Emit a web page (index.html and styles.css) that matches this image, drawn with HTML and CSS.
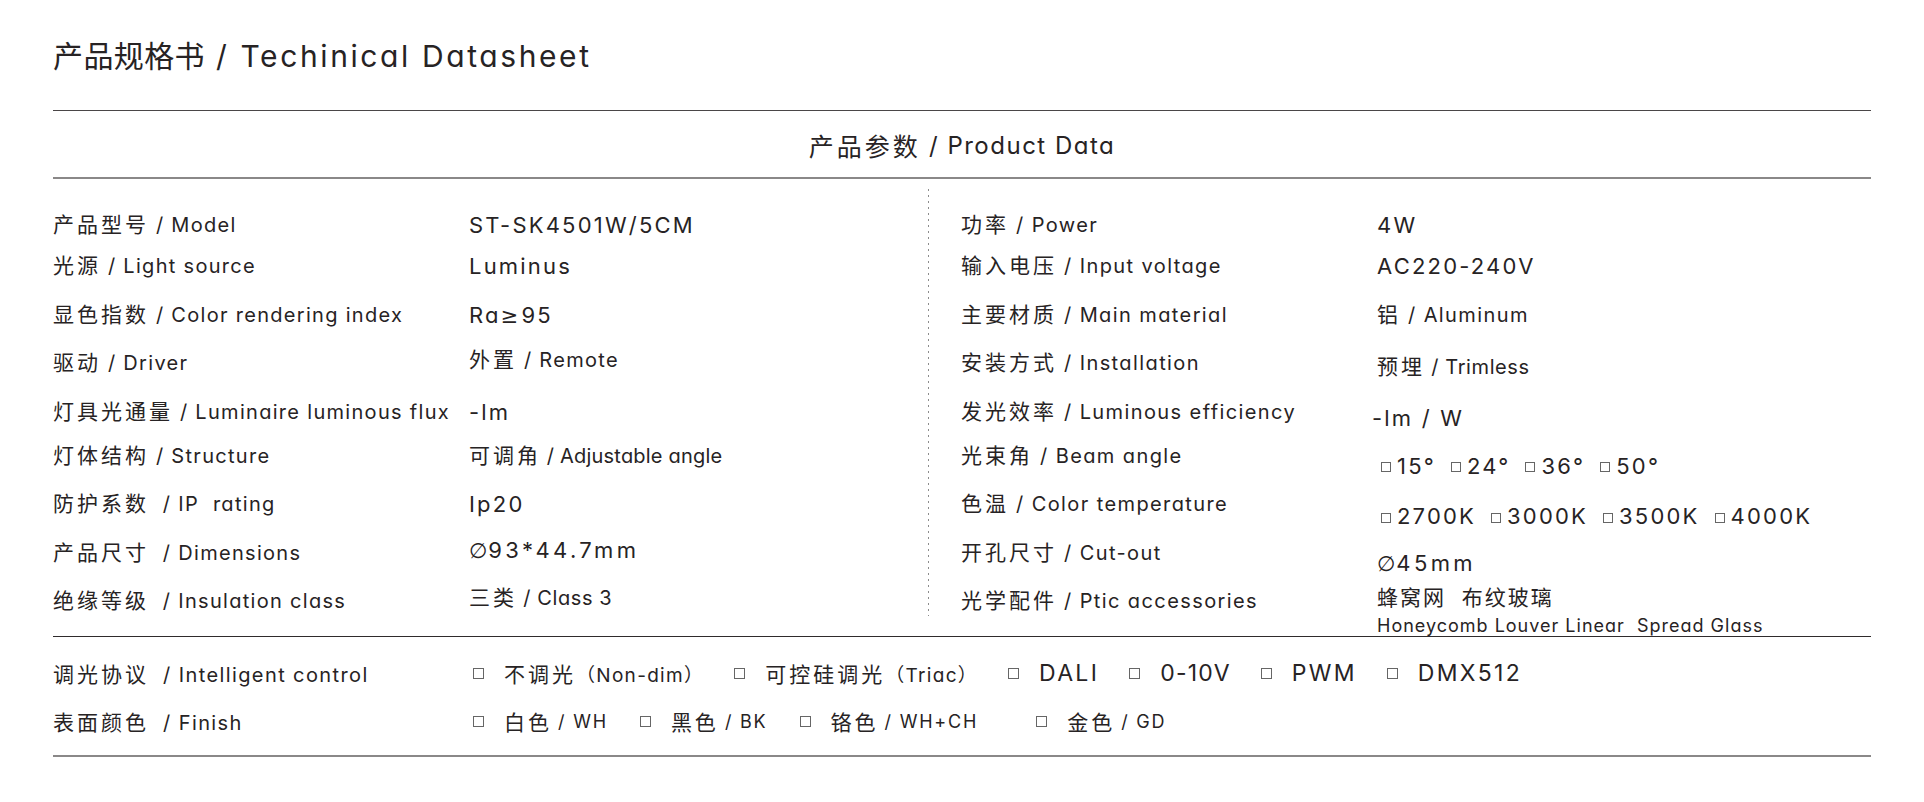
FILE: index.html
```html
<!DOCTYPE html>
<html lang="zh-CN">
<head>
<meta charset="utf-8">
<title>产品规格书 / Techinical Datasheet</title>
<link rel="stylesheet" href="styles.css">
</head>
<body>
<div class="sheet">
  <h1 class="title"><span class="zh">产品规格书</span><span class="en"> / Techinical Datasheet</span></h1>
  <div class="band"><span class="zh">产品参数</span><span class="en">&nbsp;/ Product Data</span></div>
  <div class="specs">
    <div class="col col-left">
      <div class="row"><span class="k"><span class="zh">产品型号</span> / Model</span><span class="v big">ST-SK4501W/5CM</span></div>
      <div class="row"><span class="k"><span class="zh">光源</span> / Light source</span><span class="v big">Luminus</span></div>
      <div class="row"><span class="k"><span class="zh">显色指数</span> / Color rendering index</span><span class="v big">Ra<span class="ge">≥</span>95</span></div>
      <div class="row"><span class="k"><span class="zh">驱动</span> / Driver</span><span class="v up"><span class="zh">外置</span> / Remote</span></div>
      <div class="row"><span class="k"><span class="zh">灯具光通量</span> / Luminaire luminous flux</span><span class="v big">-lm</span></div>
      <div class="row"><span class="k"><span class="zh">灯体结构</span> / Structure</span><span class="v tight"><span class="zh">可调角</span> / Adjustable angle</span></div>
      <div class="row"><span class="k"><span class="zh">防护系数</span> &nbsp;/ IP&nbsp; rating</span><span class="v big">Ip20</span></div>
      <div class="row"><span class="k"><span class="zh">产品尺寸</span> &nbsp;/ Dimensions</span><span class="v big up wide-v"><span class="dia">∅</span>93*44.7mm</span></div>
      <div class="row"><span class="k"><span class="zh">绝缘等级</span> &nbsp;/ Insulation class</span><span class="v up snug"><span class="zh">三类</span> / Class 3</span></div>
    </div>
    <div class="col col-right">
      <div class="row"><span class="k"><span class="zh">功率</span> / Power</span><span class="v big">4W</span></div>
      <div class="row"><span class="k"><span class="zh">输入电压</span> / Input voltage</span><span class="v big">AC220-240V</span></div>
      <div class="row"><span class="k"><span class="zh">主要材质</span> / Main material</span><span class="v"><span class="zh">铝</span> / Aluminum</span></div>
      <div class="row"><span class="k"><span class="zh">安装方式</span> / Installation</span><span class="v drop-s snug"><span class="zh">预埋</span> / Trimless</span></div>
      <div class="row"><span class="k"><span class="zh">发光效率</span> / Luminous efficiency</span><span class="v big drop-m shift-l">-lm / W</span></div>
      <div class="row"><span class="k"><span class="zh">光束角</span> / Beam angle</span><span class="v big drop-l opts-inline"><span class="ci"><i class="cb sm"></i>15°</span><span class="ci"><i class="cb sm"></i>24°</span><span class="ci"><i class="cb sm"></i>36°</span><span class="ci"><i class="cb sm"></i>50°</span></span></div>
      <div class="row"><span class="k"><span class="zh">色温</span> / Color temperature</span><span class="v big drop-xl opts-inline"><span class="ci"><i class="cb sm"></i>2700K</span><span class="ci"><i class="cb sm"></i>3000K</span><span class="ci"><i class="cb sm"></i>3500K</span><span class="ci"><i class="cb sm"></i>4000K</span></span></div>
      <div class="row"><span class="k"><span class="zh">开孔尺寸</span> / Cut-out</span><span class="v big drop-l wide-v"><span class="dia">∅</span>45mm</span></div>
      <div class="row"><span class="k"><span class="zh">光学配件</span> / Ptic accessories</span><span class="v stack"><span class="zh">蜂窝网&nbsp; 布纹玻璃</span><span class="en">Honeycomb Louver Linear&nbsp; Spread Glass</span></span></div>
    </div>
  </div>
  <div class="options">
    <div class="orow">
      <span class="k"><span class="zh">调光协议</span> &nbsp;/ Intelligent control</span>
      <div class="choices">
        <span class="choice"><i class="cb"></i><span class="zh">不调光</span><span class="paren">（Non-dim）</span></span>
        <span class="choice"><i class="cb"></i><span class="zh">可控硅调光</span><span class="paren">（Triac）</span></span>
        <span class="choice"><i class="cb"></i><span class="lg">DALI</span></span>
        <span class="choice"><i class="cb"></i><span class="lg num">0-10V</span></span>
        <span class="choice"><i class="cb"></i><span class="lg">PWM</span></span>
        <span class="choice"><i class="cb"></i><span class="lg">DMX512</span></span>
      </div>
    </div>
    <div class="orow">
      <span class="k"><span class="zh">表面颜色</span> &nbsp;/ Finish</span>
      <div class="choices finish">
        <span class="choice"><i class="cb"></i><span class="zh">白色</span><span class="sl">/ WH</span></span>
        <span class="choice"><i class="cb"></i><span class="zh">黑色</span><span class="sl">/ BK</span></span>
        <span class="choice wide"><i class="cb"></i><span class="zh">铬色</span><span class="sl">/ WH+CH</span></span>
        <span class="choice"><i class="cb"></i><span class="zh">金色</span><span class="sl">/ GD</span></span>
      </div>
    </div>
  </div>
</div>
</body>
</html>
```
FILE: styles.css
```css
html, body {
  margin: 0;
  padding: 0;
  background: #ffffff;
}

body {
  font-family: Inter, "Noto Sans CJK SC", "DejaVu Sans", sans-serif;
  font-feature-settings: "cv11" 1;
  color: #272324;
}

.sheet {
  width: 1818px;
  margin-left: 53px;
}

/* ---------- title ---------- */
.title {
  margin: 0;
  padding-top: 38px;
  font-size: 30px;
  line-height: 36px;
  font-weight: 400;
}

.title .zh {
  letter-spacing: 0.4px;
}

.title .en {
  letter-spacing: 2.6px;
}

/* ---------- band ---------- */
.band {
  margin-top: 36px;
  border-top: 1.5px solid #4a4647;
  border-bottom: 2px solid #8a8888;
  height: 64px;
  padding-top: 2px;
  display: flex;
  align-items: center;
  justify-content: center;
  font-size: 24px;
}

.band .zh {
  font-size: 25px;
  letter-spacing: 3px;
}

.band .en {
  letter-spacing: 1.5px;
}

/* ---------- spec grid ---------- */
.specs {
  display: grid;
  grid-template-columns: 876px 1fr;
  height: 421px;
  margin-top: 10px;
}

.col {
  padding-top: 21px;
}

.col-left {
  background-image: linear-gradient(to bottom, #8c8c8c 0, #8c8c8c 2px, transparent 2px);
  background-size: 1px 6px;
  background-repeat: repeat-y;
  background-position: right top;
}

.col-right {
  padding-left: 32px;
}

.row {
  display: grid;
  grid-template-columns: 416px 1fr;
  align-items: start;
  line-height: 30px;
  font-size: 20px;
  letter-spacing: 1.3px;
}

.col-right .row {
  letter-spacing: 1.4px;
}

.row:nth-child(1) { height: 41px; }
.row:nth-child(2) { height: 48.5px; }
.row:nth-child(3) { height: 48.5px; }
.row:nth-child(4) { height: 49px; }
.row:nth-child(5) { height: 43.5px; }
.row:nth-child(6) { height: 48.5px; }
.row:nth-child(7) { height: 48.5px; }
.row:nth-child(8) { height: 48px; }
.row:nth-child(9) { height: 30px; }

.k,
.v {
  white-space: nowrap;
}

.k .zh,
.v .zh {
  font-size: 21px;
  letter-spacing: 3px;
}

.v.big {
  font-size: 22px;
  letter-spacing: 2.2px;
}

.v.wide-v {
  letter-spacing: 3.4px;
}

.v.tight {
  letter-spacing: 0.2px;
}

.v.snug {
  letter-spacing: 0.6px;
}

.ge {
  font-family: "DejaVu Sans", sans-serif;
  font-size: 21px;
  margin: 0 1px 0 0;
}

.dia {
  font-family: "DejaVu Sans", sans-serif;
  font-size: 21px;
  letter-spacing: 1px;
}

.v.up { margin-top: -3px; }
.drop-s { padding-top: 4px; }
.drop-m { padding-top: 6px; }
.drop-l { padding-top: 10px; }
.drop-xl { padding-top: 12px; }
.shift-l { margin-left: -5px; }

.opts-inline {
  display: flex;
  gap: 15px;
  padding-left: 4px;
}

.ci {
  display: inline-flex;
  align-items: center;
  gap: 6px;
}

.cb {
  display: inline-block;
  width: 9px;
  height: 9px;
  border: 1px solid #666;
  box-sizing: border-box;
  flex: none;
}

.cb.sm {
  width: 10px;
  height: 10px;
  margin-top: 3px;
}

.stack {
  display: flex;
  flex-direction: column;
  margin-top: -3px;
}

.stack .zh {
  line-height: 30px;
  letter-spacing: 2px;
}

.stack .en {
  font-size: 18px;
  line-height: 26px;
  letter-spacing: 1px;
}

/* ---------- options ---------- */
.options {
  border-top: 1.5px solid #2f2b2c;
  border-bottom: 2px solid #8a8888;
  margin-top: 26px;
  padding: 12px 0 10px;
}

.orow {
  display: grid;
  grid-template-columns: 420px 1fr;
  align-items: center;
  height: 48px;
  font-size: 20px;
  letter-spacing: 1.4px;
}

.choices {
  display: flex;
  align-items: center;
  gap: 30px;
}

.choices.finish {
  gap: 32px;
}

.choice {
  display: inline-flex;
  align-items: center;
  white-space: nowrap;
  letter-spacing: 0;
}

.choice .cb {
  width: 11px;
  height: 11px;
  margin-right: 20px;
}

.choice .zh {
  font-size: 21px;
  letter-spacing: 3px;
}

.choice .paren {
  font-size: 19px;
  letter-spacing: 1.3px;
}

.choice .sl {
  font-size: 18px;
  margin-left: 6px;
  letter-spacing: 1.8px;
}

.choice .lg {
  font-size: 23px;
  letter-spacing: 2.3px;
}

.choice .lg.num {
  letter-spacing: 1.2px;
}

.choice.wide {
  margin-right: 26px;
}
```
